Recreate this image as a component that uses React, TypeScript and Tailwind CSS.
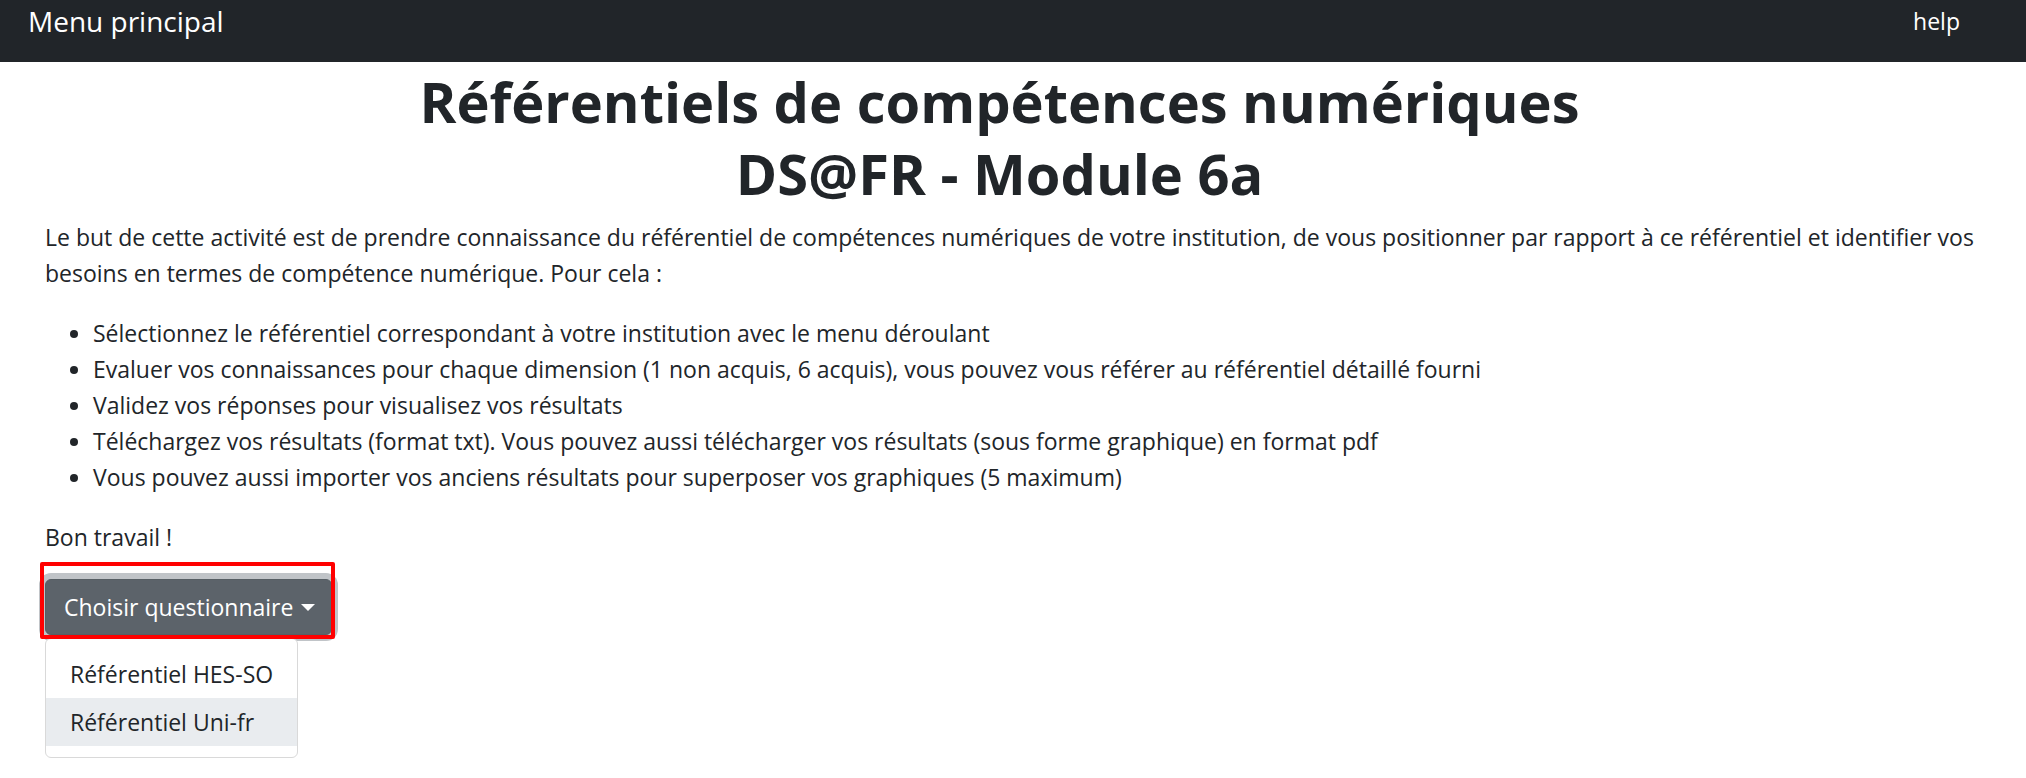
import { useState } from "react";

const steps = [
  "Sélectionnez le référentiel correspondant à votre institution avec le menu déroulant",
  "Evaluer vos connaissances pour chaque dimension (1 non acquis, 6 acquis), vous pouvez vous référer au référentiel détaillé fourni",
  "Validez vos réponses pour visualisez vos résultats",
  "Téléchargez vos résultats (format txt). Vous pouvez aussi télécharger vos résultats (sous forme graphique) en format pdf",
  "Vous pouvez aussi importer vos anciens résultats pour superposer vos graphiques (5 maximum)",
];

const questionnaires = ["Référentiel HES-SO", "Référentiel Uni-fr"];

export default function App() {
  const [open, setOpen] = useState(true);
  const [active, setActive] = useState(1);

  return (
    <div className="min-h-screen bg-white font-['Open_Sans',sans-serif] text-[23px] leading-9 text-[#212529]">
      <header className="flex h-[62px] items-start justify-between bg-[#212529] pl-7 pr-[66px] text-white">
        <a href="#" className="pt-[3px] text-[28px]">Menu principal</a>
        <a href="#" className="pt-[3px]">help</a>
      </header>
      <main className="pl-[45px] pr-10 pt-[3px]">
        <h1 className="pr-8 text-center text-[56px] font-bold leading-[72px]">
          Référentiels de compétences numériques
          <br />
          DS@FR - Module 6a
        </h1>
        <p className="mt-[10px]">
          Le but de cette activité est de prendre connaissance du référentiel de compétences numériques de votre institution, de vous positionner par rapport à ce référentiel et identifier vos besoins en termes de compétence numérique. Pour cela :
        </p>
        <ul className="mt-6 list-disc pl-12">
          {steps.map((s) => (
            <li key={s}>{s}</li>
          ))}
        </ul>
        <p className="mt-6">Bon travail !</p>
        <div className="relative mt-6 w-fit">
          <button
            type="button"
            aria-haspopup="menu"
            aria-expanded={open}
            onClick={() => setOpen(!open)}
            className="flex h-14 items-center gap-2 rounded-md border border-[#565e64] bg-[#5c636a] pl-[18px] pr-4 text-white shadow-[0_0_0_6px_#c0c4c8] outline-none"
          >
            Choisir questionnaire
            <span className="border-x-7 border-t-7 border-x-transparent border-t-white" />
          </button>
          {open && (
            <div role="menu" className="absolute left-0 top-full mt-[3px] rounded-md border border-[#d9d9d9] bg-white py-[11px]">
              {questionnaires.map((q, i) => (
                <button
                  key={q}
                  type="button"
                  role="menuitem"
                  onMouseEnter={() => setActive(i)}
                  className={
                    i === active
                      ? "block h-12 w-full whitespace-nowrap bg-[#e9ecef] px-6 text-left"
                      : "block h-12 w-full whitespace-nowrap px-6 text-left"
                  }
                >
                  {q}
                </button>
              ))}
            </div>
          )}
          <div className="pointer-events-none absolute -bottom-1 -left-[5px] -right-[3px] -top-[17px] rounded-xs border-4 border-[#ff0000]" />
        </div>
      </main>
    </div>
  );
}
